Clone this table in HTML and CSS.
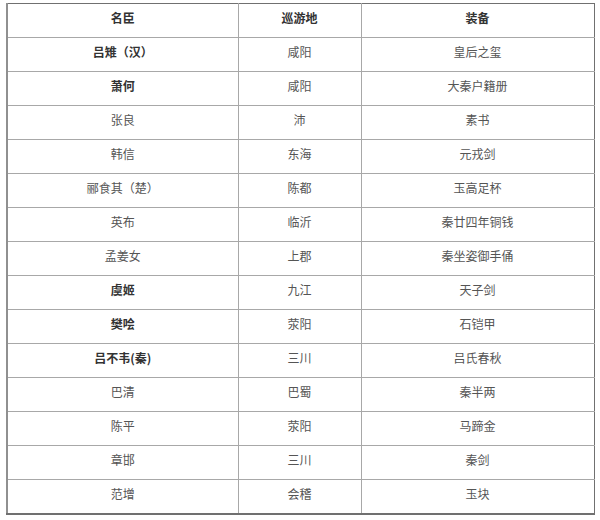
FILE: index.html
```html
<!DOCTYPE html>
<html lang="zh">
<head>
<meta charset="utf-8">
<link rel="stylesheet" href="styles.css">
</head>
<body>
<table class="tbl">
  <thead>
    <tr><th class="c1">名臣</th><th class="c2">巡游地</th><th class="c3">装备</th></tr>
  </thead>
  <tbody>
    <tr><td class="strong">吕雉（汉）</td><td>咸阳</td><td>皇后之玺</td></tr>
    <tr><td class="strong">萧何</td><td>咸阳</td><td>大秦户籍册</td></tr>
    <tr><td>张良</td><td>沛</td><td>素书</td></tr>
    <tr><td>韩信</td><td>东海</td><td>元戎剑</td></tr>
    <tr><td>郦食其（楚）</td><td>陈都</td><td>玉高足杯</td></tr>
    <tr><td>英布</td><td>临沂</td><td>秦廿四年铜钱</td></tr>
    <tr><td>孟姜女</td><td>上郡</td><td>秦坐姿御手俑</td></tr>
    <tr><td class="strong">虞姬</td><td>九江</td><td>天子剑</td></tr>
    <tr><td class="strong">樊哙</td><td>荥阳</td><td>石铠甲</td></tr>
    <tr><td class="strong">吕不韦(秦)</td><td>三川</td><td>吕氏春秋</td></tr>
    <tr><td>巴清</td><td>巴蜀</td><td>秦半两</td></tr>
    <tr><td>陈平</td><td>荥阳</td><td>马蹄金</td></tr>
    <tr><td>章邯</td><td>三川</td><td>秦剑</td></tr>
    <tr><td>范增</td><td>会稽</td><td>玉块</td></tr>
  </tbody>
</table>
<p class="note">注：史料、娱乐与历史勿混。</p>
</body>
</html>
```

FILE: styles.css
```css
html, body {
  margin: 0;
  padding: 0;
  background: #ffffff;
}
body {
  font-family: "Noto Sans CJK SC", "Noto Sans", sans-serif;
  font-size: 12px;
  color: #555555;
}
.tbl {
  margin: 3px 0 0 6px;
  border-collapse: collapse;
  width: 588px;
  table-layout: fixed;
  border-top: 1px solid #707070;
  border-right: 1px solid #707070;
  border-bottom: 2px solid #707070;
  border-left: 2px solid #909090;
}
.c1 { width: 231px; }
.c2 { width: 123px; }
.c3 { width: 233px; }
.tbl th, .tbl td {
  border: 1px solid #a8a8a8;
  height: 34px;
  box-sizing: border-box;
  padding: 5px 0 0;
  vertical-align: top;
  text-align: center;
  line-height: 17px;
  font-weight: normal;
}
.tbl th {
  font-weight: bold;
  color: #333333;
}
.tbl td.strong {
  font-weight: bold;
  color: #333333;
}
.tbl tr > :first-child { border-left: 2px solid #909090; }
.tbl tr > :last-child { border-right: 1px solid #707070; }
.tbl thead th { border-top: 1px solid #707070; }
.tbl tbody tr:last-child td { border-bottom: 2px solid #707070; }
.note {
  margin: 2px 0 0 32px;
  line-height: 17px;
  color: #555555;
}
```
